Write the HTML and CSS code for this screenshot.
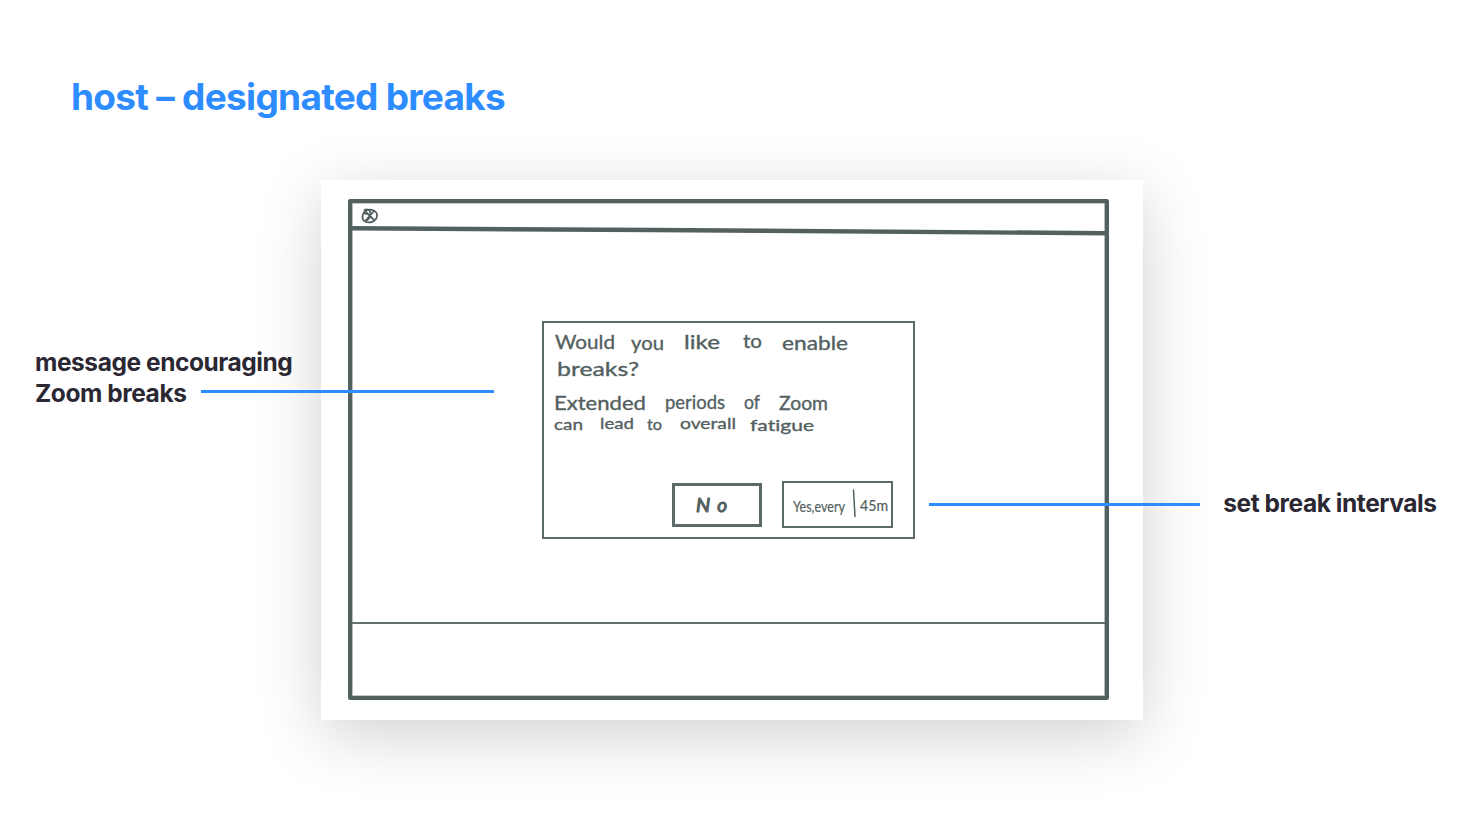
FILE: index.html
```html
<!DOCTYPE html>
<html lang="en">
<head>
<meta charset="utf-8">
<title>host – designated breaks</title>
<link rel="stylesheet" href="styles.css">
</head>
<body>
<main class="slide">
  <h1 class="title">host – designated breaks</h1>
  <div class="stage">
    <div class="callout callout-left">
      <span>message encouraging</span>
      <div class="callout-row"><span>Zoom breaks</span><i class="pointer pointer-left"></i></div>
    </div>

    <section class="card">
      <div class="window">
        <svg class="topbar" viewBox="0 0 753 34">
          <path class="bar-line" d="M-1 25.300 L300 27 L754 30.200"/>
          <g class="close-mark">
            <path d="M15 7 C10 9 9 16 13 18.500 C18 21 24.500 18 25 13 C25.500 8 20 6 15 7 C12 8 12 11 14 11"/>
            <path d="M12.500 7 C15 5.500 18 7 18.500 10 C19 14 16 17 13.500 18 M14 9 L22 17 M22 8 L14 17"/>
          </g>
        </svg>
        <div class="content">
          <div class="dialog">
            <svg class="message ink" viewBox="0 0 369 150">
              <g class="large">
                <text x="11" y="26" textLength="60" lengthAdjust="spacingAndGlyphs">Would</text>
                <text x="87" y="27" textLength="33" lengthAdjust="spacingAndGlyphs">you</text>
                <text x="140" y="26" textLength="36" lengthAdjust="spacingAndGlyphs">like</text>
                <text x="199" y="25" textLength="19" lengthAdjust="spacingAndGlyphs">to</text>
                <text x="238" y="27" textLength="66" lengthAdjust="spacingAndGlyphs">enable</text>
                <text x="13" y="53" textLength="82" lengthAdjust="spacingAndGlyphs">breaks?</text>
                <text x="10" y="87" textLength="92" lengthAdjust="spacingAndGlyphs">Extended</text>
                <text x="121" y="86" textLength="60" lengthAdjust="spacingAndGlyphs">periods</text>
                <text x="200" y="86" textLength="16" lengthAdjust="spacingAndGlyphs">of</text>
                <text x="235" y="87" textLength="49" lengthAdjust="spacingAndGlyphs">Zoom</text>
              </g>
              <g class="small">
                <text x="10" y="107" textLength="29" lengthAdjust="spacingAndGlyphs">can</text>
                <text x="56" y="106" textLength="34" lengthAdjust="spacingAndGlyphs">lead</text>
                <text x="103" y="107" textLength="15" lengthAdjust="spacingAndGlyphs">to</text>
                <text x="136" y="106" textLength="56" lengthAdjust="spacingAndGlyphs">overall</text>
                <text x="206" y="108" textLength="64" lengthAdjust="spacingAndGlyphs">fatigue</text>
              </g>
            </svg>
            <div class="actions">
              <div class="button no">
                <svg class="ink" viewBox="0 0 84 38">
                  <text x="21" y="26">N<tspan class="little-o" dx="7">o</tspan></text>
                </svg>
              </div>
              <div class="button yes">
                <svg class="ink" viewBox="0 0 107 43">
                  <text x="9" y="29" textLength="52" lengthAdjust="spacingAndGlyphs">Yes,every</text>
                  <path d="M69.500 7 L71 33.500"/>
                  <text x="76" y="28" textLength="28" lengthAdjust="spacingAndGlyphs">45m</text>
                </svg>
              </div>
            </div>
          </div>
        </div>
        <div class="bottombar"></div>
      </div>
    </section>

    <div class="callout callout-right"><i class="pointer pointer-right"></i><span>set break intervals</span></div>
  </div>
</main>
</body>
</html>
```

FILE: styles.css
```css
* { box-sizing: border-box; }

body {
  margin: 0;
  background: #fff;
  font-family: Inter, "Liberation Sans", sans-serif;
}

.slide {
  width: 1465px;
  height: 825px;
  overflow: hidden;
}

.title {
  margin: 0;
  height: 180px;
  padding: 73px 0 0 71px;
  color: #2d8cff;
  font-size: 37px;
  line-height: 48px;
  font-weight: 700;
  letter-spacing: -0.7px;
  white-space: nowrap;
}

.stage {
  display: grid;
  grid-template-columns: 321px 822px 322px;
  height: 540px;
}

.callout {
  z-index: 1;
  color: #2b2833;
  font-size: 24.5px;
  line-height: 31px;
  font-weight: 700;
  letter-spacing: -0.44px;
  white-space: nowrap;
}

.callout-left { padding: 167px 0 0 35px; }

.callout-row {
  display: flex;
  align-items: center;
}

.pointer {
  flex: none;
  height: 3px;
  background: #2d8cff;
}

.pointer-left {
  width: 293px;
  margin: -4px 0 0 15px;
}

.callout-right {
  display: flex;
  align-items: center;
  justify-content: flex-end;
  gap: 23px;
  height: 31px;
  margin-top: 308px;
  padding-right: 28.5px;
}

.pointer-right {
  width: 271px;
  margin-top: 2px;
}

.card {
  padding: 19px 34px 20px 27px;
  background: #fff;
  box-shadow: 0 15px 60px rgba(0, 0, 0, 0.18);
}

.window {
  display: flex;
  flex-direction: column;
  width: 761px;
  height: 501px;
  border: 4px solid #536060;
  border-radius: 2px;
  box-shadow: inset 0 0 0 0.6px #8a9494;
}

.topbar {
  flex: none;
  width: 753px;
  height: 34px;
}

.bar-line {
  fill: none;
  stroke: #536060;
  stroke-width: 4.4;
}

.close-mark {
  fill: none;
  stroke: #536060;
  stroke-width: 1.8;
  stroke-linecap: round;
}

.content {
  flex: 1;
  display: flex;
  justify-content: center;
  align-items: flex-start;
  padding-top: 84px;
}

.dialog {
  width: 373px;
  height: 218px;
  border: 2px solid #5c6969;
}

.ink {
  display: block;
  overflow: visible;
  fill: #536060;
  stroke: #536060;
  stroke-width: 0.35;
  stroke-linejoin: round;
  stroke-linecap: round;
  font-family: Lato, "Open Sans", sans-serif;
  font-variant-ligatures: none;
}

.message {
  width: 369px;
  height: 150px;
}

.large { font-size: 19px; }
.small { font-size: 16px; }

.actions {
  display: flex;
  justify-content: flex-end;
  align-items: center;
  gap: 20px;
  height: 66px;
  padding: 0 20px 3px 0;
}

.button { border: 2px solid #5c6969; }

.no {
  width: 90px;
  height: 44px;
  border-width: 3px;
}

.no .ink {
  width: 84px;
  height: 38px;
  font-size: 20px;
  font-style: italic;
  stroke-width: 1.1;
}

.little-o { font-size: 19px; }

.yes {
  width: 111px;
  height: 47px;
}

.yes .ink {
  width: 107px;
  height: 43px;
  font-size: 16px;
  stroke-width: 0.2;
}

.yes path { stroke-width: 1.5; }

.bottombar {
  height: 74px;
  border-top: 2px solid #647070;
}
```
